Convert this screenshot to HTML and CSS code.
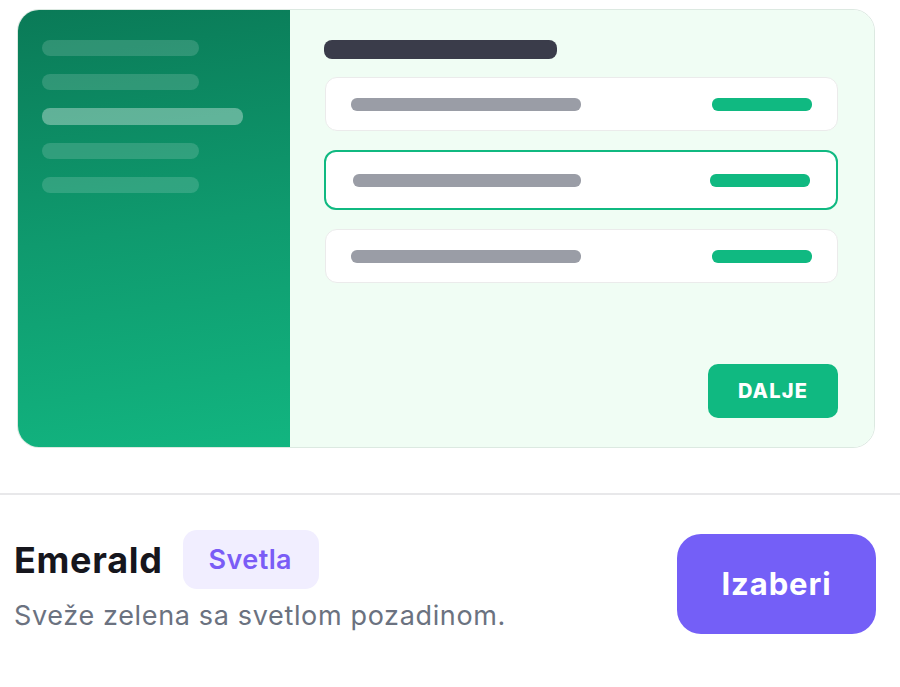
FILE: index.html
```html
<!DOCTYPE html>
<html lang="sr">
<head>
<meta charset="utf-8">
<title>Tema Emerald</title>
<link rel="stylesheet" href="styles.css">
</head>
<body>
  <article class="theme-card">
    <div class="preview">
      <aside class="preview-side">
        <span class="side-line"></span>
        <span class="side-line"></span>
        <span class="side-line side-line--active"></span>
        <span class="side-line"></span>
        <span class="side-line"></span>
      </aside>
      <div class="preview-main">
        <span class="heading-bar"></span>
        <div class="option-list">
          <div class="option">
            <span class="option-label"></span>
            <span class="option-value"></span>
          </div>
          <div class="option option--selected">
            <span class="option-label"></span>
            <span class="option-value"></span>
          </div>
          <div class="option">
            <span class="option-label"></span>
            <span class="option-value"></span>
          </div>
        </div>
        <button class="next-btn" type="button">DALJE</button>
      </div>
    </div>

    <footer class="theme-info">
      <div class="theme-text">
        <div class="theme-title">
          <h2 class="theme-name">Emerald</h2>
          <span class="theme-badge">Svetla</span>
        </div>
        <p class="theme-desc">Sveže zelena sa svetlom pozadinom.</p>
      </div>
      <button class="choose-btn" type="button">Izaberi</button>
    </footer>
  </article>
</body>
</html>
```

FILE: styles.css
```css
* {
  box-sizing: border-box;
}

html,
body {
  margin: 0;
  background: #ffffff;
}

body {
  font-family: Inter, "Noto Sans", sans-serif;
  width: 900px;
  height: 687px;
  overflow: hidden;
}

.theme-card {
  display: flex;
  flex-direction: column;
}

/* ---------- mini preview ---------- */
.preview {
  margin: 9px 25px 0 17px;
  height: 439px;
  border: 1px solid #dce9e1;
  border-radius: 22px;
  overflow: hidden;
  display: grid;
  grid-template-columns: 272px 1fr;
}

.preview-side {
  background: linear-gradient(172deg, #0a7a57 0%, #0f9a6e 50%, #12b580 100%);
  padding: 30px 0 0 24px;
  display: flex;
  flex-direction: column;
  gap: 18px;
}

.side-line {
  display: block;
  width: 157px;
  height: 16px;
  border-radius: 8px;
  background: rgba(255, 255, 255, 0.15);
}

.side-line--active {
  width: 201px;
  height: 17px;
  background: rgba(255, 255, 255, 0.35);
}

.preview-main {
  background: #f0fdf4;
  padding: 30px 36px 29px 34px;
  display: flex;
  flex-direction: column;
}

.heading-bar {
  display: block;
  width: 233px;
  height: 19px;
  border-radius: 8px;
  background: #3a3c4a;
  margin-bottom: 18px;
}

.option-list {
  display: flex;
  flex-direction: column;
  gap: 19px;
}

.option {
  height: 54px;
  margin-left: 1px;
  background: #ffffff;
  border: 1px solid #ebebeb;
  border-radius: 12px;
  padding: 0 25px;
  display: flex;
  align-items: center;
  justify-content: space-between;
}

.option--selected {
  height: 60px;
  margin: 0;
  border: 2.5px solid #10b981;
  padding: 0 26px 0 27px;
}

.option-label {
  display: block;
  width: 230px;
  height: 13px;
  border-radius: 6px;
  background: #9a9da6;
}

.option--selected .option-label {
  width: 228px;
}

.option-value {
  display: block;
  width: 100px;
  height: 13px;
  border-radius: 6px;
  background: #10b981;
}

.next-btn {
  margin-top: auto;
  align-self: flex-end;
  width: 130px;
  height: 54px;
  border: 0;
  border-radius: 10px;
  background: #10b981;
  color: #ffffff;
  font-family: Inter, "Noto Sans", sans-serif;
  font-size: 20px;
  font-weight: 800;
  letter-spacing: 1.2px;
}

/* ---------- details row ---------- */
.theme-info {
  margin-top: 45px;
  border-top: 2px solid #e8e8ea;
  padding: 35px 24px 0 14px;
  display: flex;
  align-items: center;
  justify-content: space-between;
}

.theme-title {
  display: flex;
  align-items: center;
  gap: 20px;
}

.theme-name {
  margin: 0;
  font-size: 36px;
  font-weight: 700;
  color: #16161d;
  letter-spacing: 0.7px;
}

.theme-badge {
  display: inline-flex;
  align-items: center;
  height: 59px;
  padding: 0 27px 0 26px;
  border-radius: 14px;
  background: #f1eeff;
  color: #7a5cf6;
  font-size: 27px;
  font-weight: 600;
  letter-spacing: 0.4px;
}

.theme-desc {
  margin: 9px 0 0;
  font-size: 27px;
  line-height: 36px;
  color: #6b7280;
  letter-spacing: 0.65px;
}

.choose-btn {
  width: 199px;
  height: 100px;
  margin-top: 3px;
  border: 0;
  border-radius: 24px;
  background: #745ff7;
  color: #ffffff;
  font-family: Inter, "Noto Sans", sans-serif;
  font-size: 31px;
  font-weight: 700;
  letter-spacing: 0.9px;
}
```
